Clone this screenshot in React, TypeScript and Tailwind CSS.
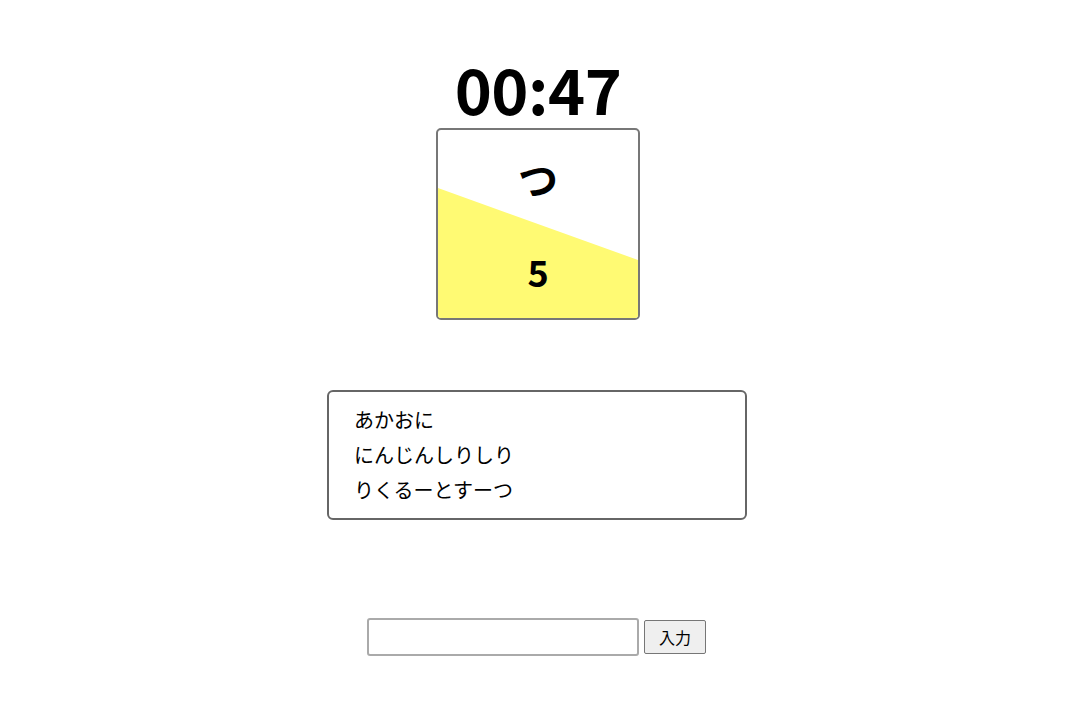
import React, { useState } from "react";

const FONT = "font-['Noto_Sans_CJK_JP','Noto_Sans',sans-serif]";

const WORDS = ["あかおに", "にんじんしりしり", "りくるーとすーつ"];

export default function App() {
  const [value, setValue] = useState("");

  return (
    <div className={`${FONT} min-h-[716px] bg-white text-black flex flex-col items-center`}>
      {/* timer */}
      <div className="mt-[50px] ml-[3px] h-[78px] text-[63px] font-bold leading-[76px] tracking-[-0.5px]">
        00:47
      </div>

      {/* current card */}
      <div className="relative ml-[3px] w-[204px] h-[192px] border-2 border-[#777] rounded-[5px] overflow-hidden">
        <div className="absolute inset-0 bg-[#fffa73] [clip-path:polygon(0_58px,100%_130px,100%_100%,0_100%)]" />
        <div className="relative flex flex-col items-center">
          <div className="mt-[22px] h-[52px] text-[40px] font-bold leading-[52px]">つ</div>
          <div className="mt-[41px] h-[52px] text-[36px] font-bold leading-[52px]">5</div>
        </div>
      </div>

      {/* history */}
      <div className="mt-[70px] ml-[1px] w-[420px] h-[130px] border-2 border-[#666] rounded-[6px] pl-[25px] pt-[10px]">
        {WORDS.map((w) => (
          <div key={w} className="text-[20px] leading-[35px]">
            {w}
          </div>
        ))}
      </div>

      {/* input row */}
      <div className="mt-[98px] flex items-center gap-[5px]">
        <input
          value={value}
          onChange={(e) => setValue(e.target.value)}
          className="w-[272px] h-[38px] border-2 border-[#aaa] rounded-[3px] px-2 text-[16px] outline-none"
        />
        <button className="w-[62px] h-[34px] border border-[#767676] bg-[#efefef] rounded-[2px] text-[16px] leading-none text-black">
          入力
        </button>
      </div>
    </div>
  );
}
